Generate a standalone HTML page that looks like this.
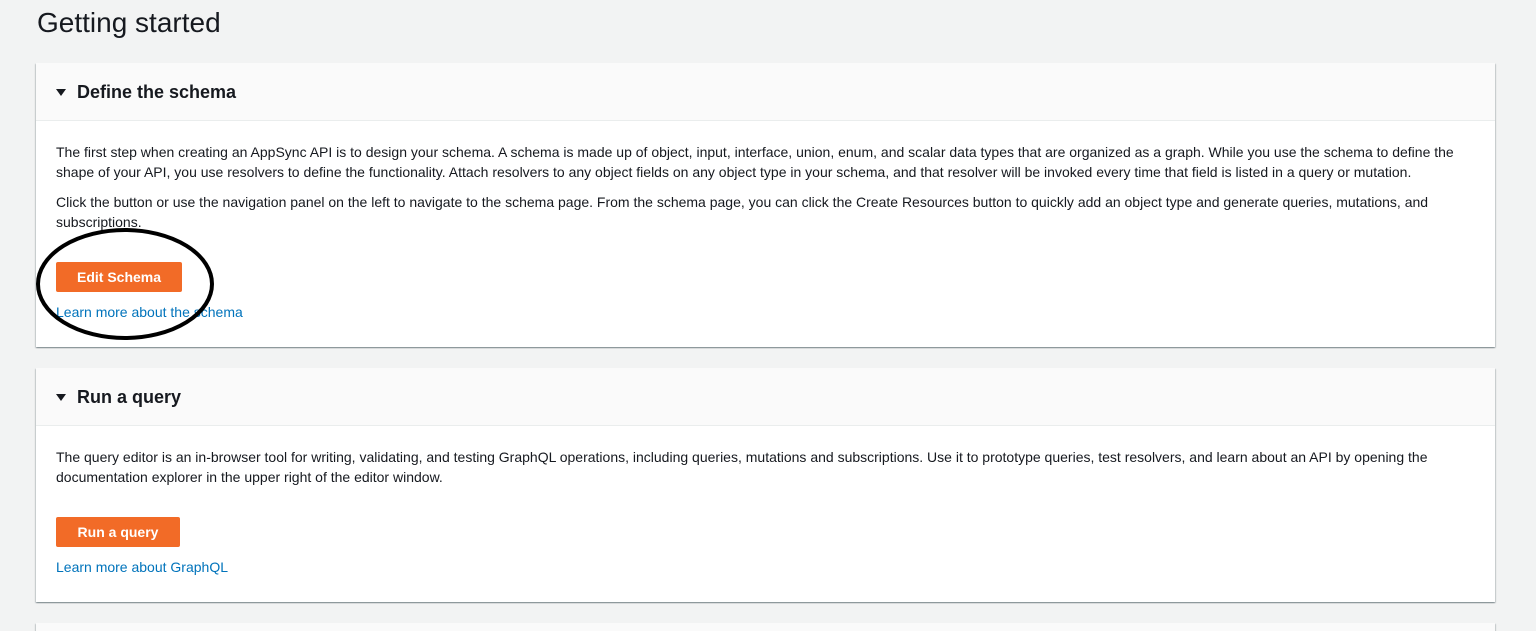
<!DOCTYPE html>
<html><head><style>
html,body{margin:0;width:1536px;height:631px;overflow:hidden}
body{background:#f2f3f3;font-family:"Liberation Sans",sans-serif;position:relative;color:#16191f}
h1{position:absolute;left:37px;top:4px;margin:0;font-size:28px;font-weight:normal;line-height:38px}
.panel{position:absolute;left:36px;width:1459px;background:#fff;box-shadow:0 1px 1px rgba(0,28,36,.3),1px 1px 1px rgba(0,28,36,.15),-1px 1px 1px rgba(0,28,36,.15)}
.hd{height:58px;background:#fafafa;border-bottom:1px solid #eaeded;box-sizing:border-box;display:flex;align-items:center;padding-left:20px;font-weight:bold;font-size:18px;padding-top:2px}
.hd .tri{display:inline-block;width:0;height:0;border-left:5px solid transparent;border-right:5px solid transparent;border-top:7px solid #16191f;margin-right:11px}
.bd{padding:21px 20px 0 20px;font-size:14px;line-height:20px}
p{margin:0 0 10px 0}
.btn{display:inline-block;background:#f26b27;color:#fff;font-weight:bold;font-size:14px;height:30px;line-height:30px;border-radius:2px;text-align:center;margin-top:30px}
a{color:#0073bb;text-decoration:none;display:block;margin-top:10px}
</style></head><body>
<h1>Getting started</h1>
<div class="panel" style="top:63px;height:284px">
<div class="hd"><span class="tri"></span>Define the schema</div>
<div class="bd">
<p>The first step when creating an AppSync API is to design your schema. A schema is made up of object, input, interface, union, enum, and scalar data types that are organized as a graph. While you use the schema to define the shape of your API, you use resolvers to define the functionality. Attach resolvers to any object fields on any object type in your schema, and that resolver will be invoked every time that field is listed in a query or mutation.</p>
<p style="margin:0">Click the button or use the navigation panel on the left to navigate to the schema page. From the schema page, you can click the Create Resources button to quickly add an object type and generate queries, mutations, and subscriptions.</p>
<div class="btn" style="width:126px">Edit Schema</div>
<a>Learn more about the schema</a>
</div></div>
<div class="panel" style="top:368px;height:234px">
<div class="hd"><span class="tri"></span>Run a query</div>
<div class="bd">
<p style="margin:0">The query editor is an in-browser tool for writing, validating, and testing GraphQL operations, including queries, mutations and subscriptions. Use it to prototype queries, test resolvers, and learn about an API by opening the documentation explorer in the upper right of the editor window.</p>
<div class="btn" style="width:124px">Run a query</div>
<a>Learn more about GraphQL</a>
</div></div>
<div class="panel" style="top:623px;height:8px;background:#fafafa"></div>
<svg style="position:absolute;left:0;top:0" width="1536" height="631"><ellipse cx="125" cy="284" rx="87" ry="54" fill="none" stroke="#000" stroke-width="4"/></svg>
</body></html>
